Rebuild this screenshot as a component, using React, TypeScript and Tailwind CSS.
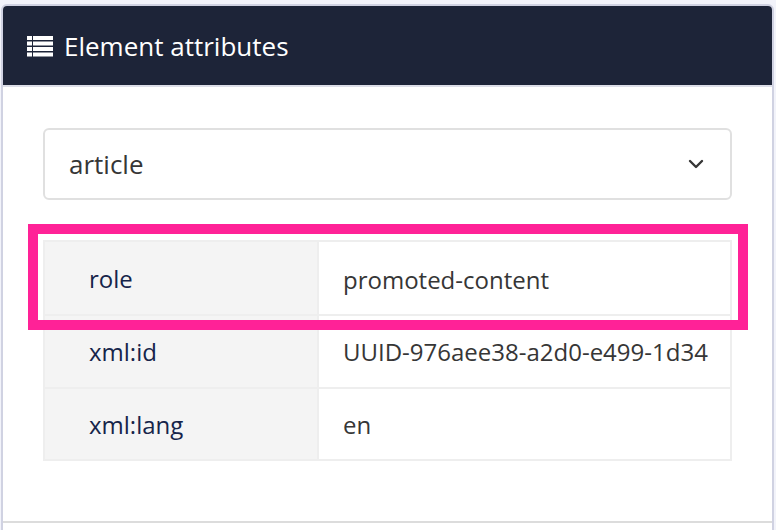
import { ChevronDown } from 'lucide-react'

const rows = [
  { name: 'role', value: 'promoted-content', height: 'h-[74px]', nudge: 'pt-[2px]', valueNudge: 'pt-[3px]' },
  { name: 'xml:id', value: 'UUID-976aee38-a2d0-e499-1d34', height: 'h-[73px]', nudge: '', valueNudge: '' },
  { name: 'xml:lang', value: 'en', height: 'h-[72px]', nudge: 'pt-[2px]', valueNudge: 'pt-[2px]' },
]

function ListIcon() {
  return (
    <svg width="26" height="21" viewBox="0 0 26 21" className="shrink-0 text-white" fill="currentColor">
      <rect x="0" y="0" width="5" height="4" />
      <rect x="6" y="0" width="20" height="4" />
      <rect x="0" y="5.5" width="5" height="4" />
      <rect x="6" y="5.5" width="20" height="4" />
      <rect x="0" y="11" width="5" height="4" />
      <rect x="6" y="11" width="20" height="4" />
      <rect x="0" y="16.5" width="5" height="4" />
      <rect x="6" y="16.5" width="20" height="4" />
    </svg>
  )
}

export default function App() {
  return (
    <div className="relative h-[530px] w-[776px] overflow-hidden bg-[#f2f3fa] pt-[4px] pl-[1px] font-['Open_Sans','Noto_Sans',sans-serif]">
      {/* Card */}
      <div className="h-[540px] w-[773px] rounded-t-[6px] border-2 border-[#d0d2e2] bg-white">
        <div className="flex h-[81px] items-center gap-[11px] rounded-t-[4px] border-b-2 border-[#dcdee8] bg-[#1d2438] pt-[2px] pl-[24px] text-[26px] text-white">
          <ListIcon />
          <span>Element attributes</span>
        </div>

        <div className="px-[40px] pt-[41px]">
          <div className="flex h-[72px] w-[689px] items-center justify-between rounded-[6px] border-2 border-[#e0e0e0] pr-[22px] pl-[24px] text-[26px] text-[#363636]">
            <span>article</span>
            <ChevronDown size={24} strokeWidth={2.4} className="text-[#363636]" />
          </div>

          <table className="mt-[40px] w-[689px] table-fixed border-collapse text-[24px]">
            <tbody>
              {rows.map((row) => (
                <tr key={row.name} className={row.height}>
                  <th className={`w-[274px] border-2 border-[#eeeeee] bg-[#f4f4f4] pl-[44px] text-left font-normal text-[#16244a] ${row.nudge}`}>
                    {row.name}
                  </th>
                  <td className={`border-2 border-[#eeeeee] pl-[24px] whitespace-nowrap text-[#363636] ${row.valueNudge}`}>{row.value}</td>
                </tr>
              ))}
            </tbody>
          </table>
        </div>

        <div className="mt-[60px] border-t-2 border-[#dcdcdc]" />
      </div>

      {/* Highlight */}
      <div className="absolute top-[224px] left-[28px] h-[106px] w-[720px] border-[10px] border-[#ff2297]" />
    </div>
  )
}
